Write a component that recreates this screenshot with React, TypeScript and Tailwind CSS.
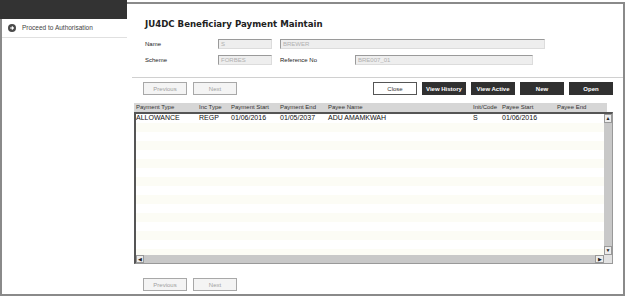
import React from 'react'

const cols = [
  { label: 'Payment Type', w: 'w-[63px]' },
  { label: 'Inc Type', w: 'w-[32px]' },
  { label: 'Payment Start', w: 'w-[49px]' },
  { label: 'Payment End', w: 'w-[48px]' },
  { label: 'Payee Name', w: 'w-[145px]' },
  { label: 'Init/Code', w: 'w-[29px]' },
  { label: 'Payee Start', w: 'w-[55px]' },
  { label: 'Payee End', w: 'w-[50px]' },
]

const row = ['ALLOWANCE', 'REGP', '01/06/2016', '01/05/2037', 'ADU AMAMKWAH', 'S', '01/06/2016', '']

const GrayBtn = ({ label }: { label: string }) => (
  <button className="w-[44px] h-[13px] border border-[#a8a8a8] bg-[#f4f4f4] text-[6px] text-[#a0a0a0] leading-none">
    {label}
  </button>
)

const DarkBtn = ({ label }: { label: string }) => (
  <button className="w-[44px] h-[13px] bg-[#303030] text-[6px] font-bold text-white leading-none">{label}</button>
)

const Field = ({ value, w }: { value: string; w: string }) => (
  <div
    className={`${w} h-[10px] bg-[#eeeeee] border-t border-l border-[#9a9a9a] border-b border-r border-b-[#dcdcdc] border-r-[#dcdcdc] text-[6px] leading-[8px] pl-[2px] text-[#b0b0b0]`}
  >
    {value}
  </div>
)

const App = () => {
  return (
    <div className="w-[628px] h-[296px] bg-white flex font-['DejaVu_Sans',sans-serif] text-[#222]">
      {/* Sidebar */}
      <div className="w-[127px] flex flex-col">
        <div className="h-[19px] bg-[#333333]" />
        <div className="flex-1 border-l-2 border-b-2 border-[#8a8a8a] flex flex-col">
          <div className="h-[19px] border-b border-[#e0e0e0] flex items-center pl-[6px] gap-[6px]">
            <svg width="8" height="8" viewBox="0 0 8 8">
              <circle cx="4" cy="4" r="4" fill="#4a4a4a" />
              <path d="M2 4 H5.2 M3.8 2.5 L5.4 4 L3.8 5.5" stroke="white" strokeWidth="1.1" fill="none" />
            </svg>
            <span className="text-[6.5px] text-[#444] font-['Liberation_Sans',sans-serif]">Proceed to Authorisation</span>
          </div>
        </div>
      </div>

      {/* Main */}
      <div className="flex-1 mt-[2px] mr-[3px] border-t-2 border-r-2 border-b-2 border-[#8a8a8a] flex flex-col">
        <div className="pl-[18px] pt-[15px]">
          <h1 className="text-[8.6px] font-bold text-[#222] leading-[11px]">JU4DC Beneficiary Payment Maintain</h1>
          <div className="mt-[9px] flex items-center text-[6px] font-['Liberation_Sans',sans-serif]">
            <span className="w-[73px]">Name</span>
            <Field value="S" w="w-[54px]" />
            <div className="w-[8px]" />
            <Field value="BREWER" w="w-[265px]" />
          </div>
          <div className="mt-[6px] flex items-center text-[6px] font-['Liberation_Sans',sans-serif]">
            <span className="w-[73px]">Scheme</span>
            <Field value="FORBES" w="w-[54px]" />
            <span className="w-[83px] pl-[8px]">Reference No</span>
            <Field value="BRE007_01" w="w-[178px]" />
          </div>
        </div>

        <div className="mt-[12px] ml-[5px] border-t border-[#d0d0d0]" />

        <div className="mt-[4px] flex items-center pl-[16px] font-['Liberation_Sans',sans-serif]">
          <div className="flex gap-[6px]">
            <GrayBtn label="Previous" />
            <GrayBtn label="Next" />
          </div>
          <div className="ml-[136px] flex gap-[5px]">
            <button className="w-[44px] h-[13px] border border-[#555] bg-white text-[6px] text-[#333] leading-none">
              Close
            </button>
            <DarkBtn label="View History" />
            <DarkBtn label="View Active" />
            <DarkBtn label="New" />
            <DarkBtn label="Open" />
          </div>
        </div>

        {/* Table */}
        <div className="mt-[8px] ml-[7px] w-[479px] font-['Liberation_Sans',sans-serif]">
          <div className="w-[473px] h-[9px] bg-[#d6d6d6] flex items-center pl-[2px] text-[6px] text-[#333]">
            {cols.map((c) => (
              <span key={c.label} className={`${c.w} shrink-0`}>
                {c.label}
              </span>
            ))}
          </div>
          <div className="h-[152px] border-t-2 border-l-2 border-[#555] border-r border-b border-r-[#999] border-b-[#999] flex flex-col">
            <div className="flex-1 flex min-h-0">
              <div className="flex-1 flex flex-col overflow-hidden">
                <div className="h-[9px] flex items-center text-[7px] text-[#111] shrink-0">
                  {row.map((v, i) => (
                    <span key={i} className={`${cols[i].w} shrink-0`}>
                      {v}
                    </span>
                  ))}
                </div>
                {Array.from({ length: 15 }).map((_, i) => (
                  <div key={i} className={`h-[9px] shrink-0 ${i % 2 === 0 ? 'bg-[#fcfcf5]' : 'bg-white'}`} />
                ))}
              </div>
              {/* vertical scrollbar */}
              <div className="w-[8px] bg-[#c8c8c8] flex flex-col justify-between">
                <div className="h-[9px] bg-[#ececec] border border-[#999] flex items-center justify-center text-[5px] leading-none">
                  ▲
                </div>
                <div className="h-[9px] bg-[#ececec] border border-[#999] flex items-center justify-center text-[5px] leading-none">
                  ▼
                </div>
              </div>
            </div>
            {/* horizontal scrollbar */}
            <div className="h-[8px] flex">
              <div className="flex-1 bg-[#c8c8c8] flex justify-between">
                <div className="w-[8px] bg-[#ececec] border border-[#999] flex items-center justify-center text-[5px] leading-none">
                  ◀
                </div>
                <div className="w-[9px] bg-[#ececec] border border-[#999] flex items-center justify-center text-[5px] leading-none">
                  ▶
                </div>
              </div>
              <div className="w-[8px] bg-[#e2e2e2]" />
            </div>
          </div>
        </div>

        <div className="mt-[14px] flex gap-[6px] pl-[16px] font-['Liberation_Sans',sans-serif]">
          <GrayBtn label="Previous" />
          <GrayBtn label="Next" />
        </div>
      </div>
    </div>
  )
}

export default App
